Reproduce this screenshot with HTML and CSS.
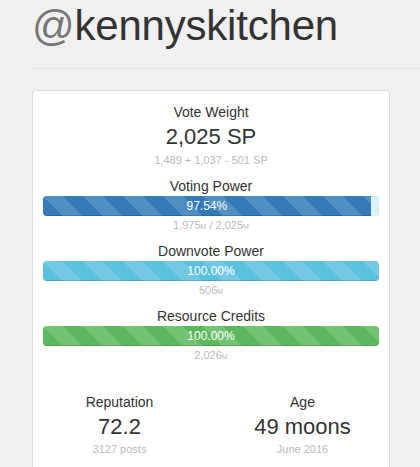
FILE: index.html
```html
<!DOCTYPE html>
<html>
<head>
<meta charset="utf-8">
<link rel="stylesheet" href="styles.css">
</head>
<body>
<div class="page">
  <h1 class="title"><span class="at">@</span>kennyskitchen</h1>
  <div class="rule"></div>
  <div class="card">
    <div class="label">Vote Weight</div>
    <div class="big">2,025 SP</div>
    <div class="sub">1,489 + 1,037 - 501 SP</div>

    <div class="meter">
      <div class="label">Voting Power</div>
      <div class="bar bar-track-blue"><div class="fill fill-blue" style="width:97.54%">97.54%</div></div>
      <div class="sub tight">1,975<span class="unit">M</span> / 2,025<span class="unit">M</span></div>
    </div>

    <div class="meter">
      <div class="label">Downvote Power</div>
      <div class="bar"><div class="fill fill-info" style="width:100%">100.00%</div></div>
      <div class="sub tight">506<span class="unit">M</span></div>
    </div>

    <div class="meter">
      <div class="label">Resource Credits</div>
      <div class="bar"><div class="fill fill-green" style="width:100%">100.00%</div></div>
      <div class="sub tight">2,026<span class="unit">M</span></div>
    </div>

    <div class="stats">
      <div class="stat">
        <div class="label">Reputation</div>
        <div class="big">72.2</div>
        <div class="sub small">3127 posts</div>
      </div>
      <div class="stat">
        <div class="label">Age</div>
        <div class="big">49 moons</div>
        <div class="sub small">June 2016</div>
      </div>
    </div>
  </div>
</div>
</body>
</html>
```
FILE: styles.css
```css
html, body {
  margin: 0;
  padding: 0;
  background: #f0f0f0;
  font-family: "Liberation Sans", Arial, sans-serif;
  color: #333;
  overflow: hidden;
}
.page {
  padding: 0 30px 0 32px;
}
.title {
  margin: 0;
  padding-top: 2px;
  font-size: 42px;
  font-weight: normal;
  line-height: 48px;
  color: #333;
  letter-spacing: -0.2px;
}
.at {
  color: #777;
}
.rule {
  height: 1px;
  background: #e6e6e6;
  margin: 18px -30px 0 0;
}
.card {
  margin-top: 21px;
  background: #fff;
  border: 1px solid #dcdcdc;
  border-radius: 4px;
  box-shadow: 0 1px 1px rgba(0,0,0,0.05);
  padding: 11px 10px 40px 10px;
  text-align: center;
}
.label {
  font-size: 14px;
  line-height: 20px;
  color: #333;
}
.big {
  font-size: 22px;
  line-height: 26px;
  margin-top: 2px;
  color: #333;
}
.sub {
  font-size: 11px;
  line-height: 16px;
  margin-top: 2px;
  color: #bbb;
}
.sub.tight {
  margin-top: 1px;
}
.sub.small {
  margin-top: 1px;
}
.unit {
  font-size: 7px;
  line-height: 0;
}
.meter {
  margin-top: 8px;
}
.bar {
  height: 20px;
  border-radius: 4px;
  overflow: hidden;
  background: #f5f5f5;
  box-shadow: inset 0 1px 2px rgba(0,0,0,0.1);
  display: flex;
}
.bar-track-blue {
  background: #d9f3fc;
}
.fill {
  height: 20px;
  font-size: 12px;
  line-height: 20px;
  color: #fff;
  text-align: center;
  box-shadow: inset 0 -1px 0 rgba(0,0,0,0.15);
  background-image: linear-gradient(45deg, rgba(255,255,255,0.15) 25%, transparent 25%, transparent 50%, rgba(255,255,255,0.15) 50%, rgba(255,255,255,0.15) 75%, transparent 75%, transparent);
  background-size: 40px 40px;
}
.fill-blue { background-color: #337ab7; }
.fill-info { background-color: #5bc0de; }
.fill-green { background-color: #5cb85c; }
.stats {
  margin: 29px -15px 0 -15px;
  display: grid;
  grid-template-columns: 1fr 1fr;
}
.stat {
  padding: 0 15px;
}
```
